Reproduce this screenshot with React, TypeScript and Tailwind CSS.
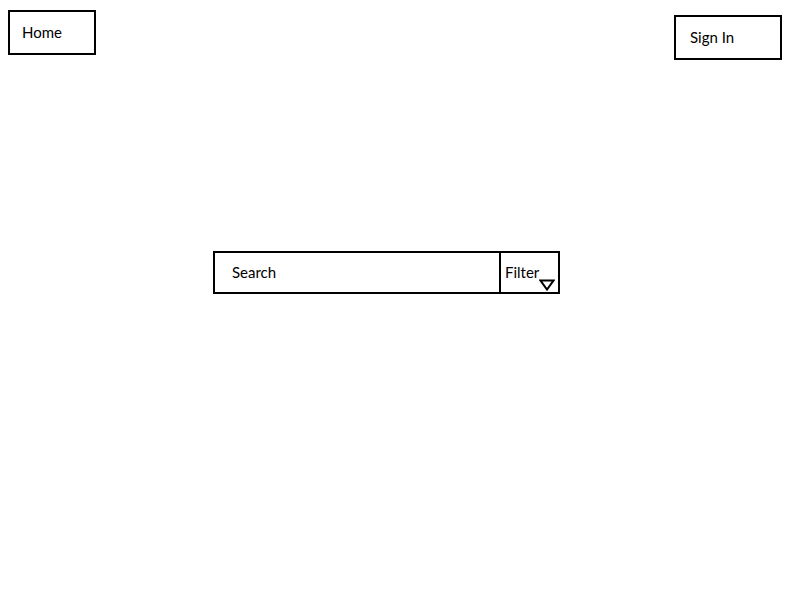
export default function App() {
  return (
    <div className="min-h-[600px] w-[800px] bg-white font-['Lato',sans-serif] text-[15px] text-black">
      <header className="flex items-start justify-between pl-2 pr-[18px] pt-[10px]">
        <button type="button" className="flex h-[45px] w-[88px] items-center border-2 border-black pl-[12px] leading-none">
          Home
        </button>
        <button type="button" className="mt-[5px] flex h-[45px] w-[108px] items-center border-2 border-black pl-[14px] leading-none">
          Sign In
        </button>
      </header>
      <div className="ml-[213px] mt-[191px] flex h-[43px] w-[347px] border-2 border-black">
        <div className="flex w-[284px] items-center pl-[17px] leading-none">Search</div>
        <div className="relative w-[59px] border-l-2 border-black pl-[4px] pt-[12px] leading-none">
          Filter
          <svg className="absolute right-[3px] bottom-[1px]" width="16" height="12" viewBox="0 0 16 12">
            <path d="M1.5 1.5 H14.5 L8 10.5 Z" fill="none" stroke="black" strokeWidth="2" strokeLinejoin="miter" />
          </svg>
        </div>
      </div>
    </div>
  );
}
